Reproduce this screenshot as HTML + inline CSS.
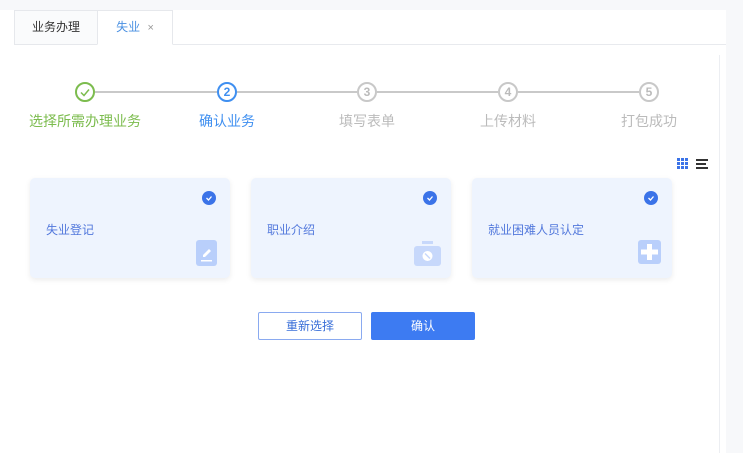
<!DOCTYPE html>
<html><head><meta charset="utf-8"><style>
*{margin:0;padding:0;box-sizing:border-box}
body{width:743px;height:453px;overflow:hidden;background:#fff;font-family:"Liberation Sans","Noto Sans CJK SC",sans-serif;position:relative}
.a{position:absolute}
.top{left:0;top:0;width:743px;height:10px;background:#f7f8fa}
.tabbar{left:14px;top:44px;width:712px;height:1px;background:#e8eaee}
.tab{top:10px;height:35px;border:1px solid #e6e8ec;font-size:12px;line-height:33px;text-align:center;background:#fafbfc;color:#333}
.c{width:20px;height:20px;border-radius:50%;border:2px solid #c8c8c8;top:82px;text-align:center;font-size:12px;font-weight:bold;line-height:16px;color:#bbb;background:#fff}
.ln{top:91px;height:2px;background:#c9c9c9}
.lb{top:111px;font-size:14px;color:#bbb;white-space:nowrap;transform:translateX(-50%)}
.card{top:178px;width:200px;height:100px;background:#eef4fe;border-radius:5px;box-shadow:0 2px 6px rgba(0,0,0,.08)}
.card .t{position:absolute;left:16px;top:43px;font-size:12px;color:#5278dc}
.card .ck{position:absolute;left:172px;top:13px;width:14px;height:14px;border-radius:50%;background:#3b73e8}
.card .ic{position:absolute;left:166px;top:62px;width:21px;height:26px;border-radius:3px;background:#b9cffb}
.btn{top:312px;width:104px;height:28px;border-radius:2px;font-size:12px;text-align:center;line-height:26px}
</style></head><body>
<div class="a top"></div>
<div class="a" style="left:719px;top:55px;width:1px;height:398px;background:#eceef2"></div>
<div class="a" style="left:726px;top:10px;width:17px;height:443px;background:#f7f8fa"></div>
<div class="a tabbar"></div>
<div class="a tab" style="left:14px;width:84px">业务办理</div>
<div class="a tab" style="left:97px;width:76px;background:#fff;border-bottom-color:#fff;color:#4a90e2">失业 <span style="color:#999;font-size:11px;margin-left:4px">×</span></div>

<div class="a ln" style="left:95px;width:122px;"></div>
<div class="a ln" style="left:237px;width:120px"></div>
<div class="a ln" style="left:377px;width:121px"></div>
<div class="a ln" style="left:518px;width:121px"></div>
<div class="a c" style="left:75px;border-color:#7cbc4e"><svg width="16" height="16" viewBox="0 0 16 16"><path d="M4 8.5l3 3 5-6" fill="none" stroke="#7cbc4e" stroke-width="1.5"/></svg></div>
<div class="a c" style="left:217px;border-color:#3f8ff0;color:#3f8ff0">2</div>
<div class="a c" style="left:357px">3</div>
<div class="a c" style="left:498px">4</div>
<div class="a c" style="left:639px">5</div>
<div class="a lb" style="left:85px;color:#7cbc4e">选择所需办理业务</div>
<div class="a lb" style="left:227px;color:#3f8ff0">确认业务</div>
<div class="a lb" style="left:367px">填写表单</div>
<div class="a lb" style="left:508px">上传材料</div>
<div class="a lb" style="left:649px">打包成功</div>

<svg class="a" style="left:677px;top:158px" width="12" height="12"><g fill="#3b73e8"><rect x="0" y="0" width="3" height="3"/><rect x="4" y="0" width="3" height="3"/><rect x="8" y="0" width="3" height="3"/><rect x="0" y="4" width="3" height="3"/><rect x="4" y="4" width="3" height="3"/><rect x="8" y="4" width="3" height="3"/><rect x="0" y="8" width="3" height="3"/><rect x="4" y="8" width="3" height="3"/><rect x="8" y="8" width="3" height="3"/></g></svg>
<svg class="a" style="left:696px;top:159px" width="12" height="10"><g fill="#333"><rect y="0" width="12" height="2"/><rect y="4" width="10" height="2"/><rect y="8" width="12" height="2"/></g></svg>

<div class="a card" style="left:30px"><div class="t">失业登记</div><div class="ck"><svg width="14" height="14"><path d="M4.5 7l2 2 3-3.5" fill="none" stroke="#fff" stroke-width="1.3"/></svg></div><div class="ic"><svg width="21" height="26"><path d="M7 15l6-6 2 2-6 6H7z" fill="#fff"/><rect x="5" y="20" width="11" height="1.5" fill="#fff"/></svg></div></div>
<div class="a card" style="left:251px"><div class="t">职业介绍</div><div class="ck"><svg width="14" height="14"><path d="M4.5 7l2 2 3-3.5" fill="none" stroke="#fff" stroke-width="1.3"/></svg></div><div class="ic" style="left:163px;width:27px;background:none"><svg width="27" height="26"><rect x="8" y="1" width="11" height="3" fill="#c7d8fb"/><rect x="0" y="6" width="27" height="20" rx="3" fill="#c7d8fb"/><circle cx="13.5" cy="16" r="5" fill="#fff"/><path d="M11 13.5l5 5" stroke="#c7d8fb" stroke-width="1.5"/></svg></div></div>
<div class="a card" style="left:472px"><div class="t">就业困难人员认定</div><div class="ck"><svg width="14" height="14"><path d="M4.5 7l2 2 3-3.5" fill="none" stroke="#fff" stroke-width="1.3"/></svg></div><div class="ic" style="width:23px;height:24px"><svg width="23" height="24"><rect x="9" y="4" width="5" height="16" fill="#fff"/><rect x="3" y="9.5" width="17" height="5" fill="#fff"/></svg></div></div>

<div class="a btn" style="left:258px;border:1px solid #8aaaf0;color:#3a6fd8;background:#fff">重新选择</div>
<div class="a btn" style="left:371px;background:#3d7bf2;color:#fff;border:1px solid #3d7bf2">确认</div>
</body></html>
